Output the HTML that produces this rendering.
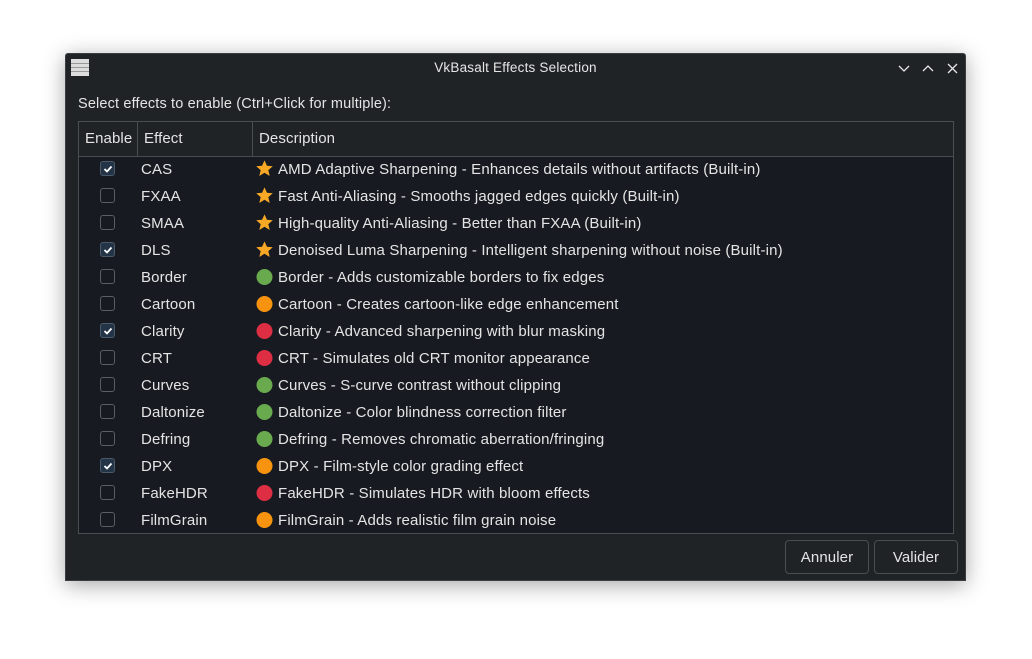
<!DOCTYPE html>
<html><head><meta charset="utf-8"><style>
body{margin:0;width:1032px;height:659px;background:#fff;font-family:"Liberation Sans",sans-serif;position:relative;overflow:hidden}
.win{position:absolute;left:65px;top:53px;width:901px;height:528px;background:#202326;border:1px solid #3a3d42;box-sizing:border-box;box-shadow:0 4px 22px rgba(0,0,0,.35);border-radius:3px 3px 0 0}
.title{position:absolute;left:0;top:0;right:0;height:29px;color:#e6e6e6;font-size:13.5px;text-align:center;line-height:28px;letter-spacing:.2px}
.lbl{position:absolute;left:12px;top:42px;color:#e4e4e4;font-size:14.5px;letter-spacing:.15px}
.tbl{position:absolute;left:12px;top:67px;width:876px;height:413px;background:#171b21;border:1px solid #4a4d52;box-sizing:border-box}
.hdr{position:absolute;left:0;top:0;right:0;height:34px;background:#202326;border-bottom:1px solid #4a4d52;color:#e4e4e4;font-size:15px;letter-spacing:.1px}
.hdr span{position:absolute;top:8px}
.sep{position:absolute;top:0;width:1px;height:34px;background:#4a4d52}
.row{position:absolute;left:0;height:27px;width:100%;color:#e4e4e4;font-size:15px;letter-spacing:.15px}
.cb{position:absolute;left:21px;top:5px;width:15px;height:15px;border:1px solid #5a5e64;border-radius:3px;box-sizing:border-box}
.cb.on{background:#243447;border-color:#4b5a6a}
.cb.on svg{position:absolute;left:1.5px;top:1.5px}
.ef{position:absolute;left:62px;top:5px}
.ic{position:absolute;left:177px;top:4px;width:17px;height:17px}
.ds{position:absolute;left:199px;top:5px}
.btn{position:absolute;top:486px;width:84px;height:34px;border:1px solid #4a4d52;border-radius:4px;box-sizing:border-box;color:#e4e4e4;font-size:15px;text-align:center;line-height:33px;letter-spacing:.1px}
</style></head><body>
<div class="win">
<div class="title">VkBasalt Effects Selection</div>
<svg style="position:absolute;left:5px;top:5px" width="18" height="17"><rect x="0" y="0" width="18" height="17" fill="#ddd"/><g stroke="#999" stroke-width="1"><line x1="0" y1="4.5" x2="18" y2="4.5"/><line x1="0" y1="8.5" x2="18" y2="8.5"/><line x1="0" y1="12.5" x2="18" y2="12.5"/></g></svg>
<svg style="position:absolute;left:830px;top:8px" width="62" height="14" fill="none" stroke="#e6e6e6" stroke-width="1.3"><path d="M3 4l5 5 5-5"/><path d="M27 9l5-5 5 5"/><path d="M52 2l9 9M61 2l-9 9"/></svg>
<div class="lbl">Select effects to enable (Ctrl+Click for multiple):</div>
<div class="tbl">
<div class="hdr"><span style="left:6px">Enable</span><div class="sep" style="left:58px"></div><span style="left:65px">Effect</span><div class="sep" style="left:173px"></div><span style="left:180px">Description</span></div>
<div id="rows"></div>
</div>
<div class="btn" style="left:719px">Annuler</div>
<div class="btn" style="left:808px">Valider</div>
</div>
<script>
var d=[["CAS",1,"s","AMD Adaptive Sharpening - Enhances details without artifacts (Built-in)"],
["FXAA",0,"s","Fast Anti-Aliasing - Smooths jagged edges quickly (Built-in)"],
["SMAA",0,"s","High-quality Anti-Aliasing - Better than FXAA (Built-in)"],
["DLS",1,"s","Denoised Luma Sharpening - Intelligent sharpening without noise (Built-in)"],
["Border",0,"g","Border - Adds customizable borders to fix edges"],
["Cartoon",0,"o","Cartoon - Creates cartoon-like edge enhancement"],
["Clarity",1,"r","Clarity - Advanced sharpening with blur masking"],
["CRT",0,"r","CRT - Simulates old CRT monitor appearance"],
["Curves",0,"g","Curves - S-curve contrast without clipping"],
["Daltonize",0,"g","Daltonize - Color blindness correction filter"],
["Defring",0,"g","Defring - Removes chromatic aberration/fringing"],
["DPX",1,"o","DPX - Film-style color grading effect"],
["FakeHDR",0,"r","FakeHDR - Simulates HDR with bloom effects"],
["FilmGrain",0,"o","FilmGrain - Adds realistic film grain noise"]];
var c={g:"#6aaa4e",o:"#f7930f",r:"#dd2e44"},h="";
d.forEach(function(r,i){
var ic=r[2]=="s"?'<svg class="ic" viewBox="0 0 16 16"><path d="M8 0.3l2.3 5.1 5.5.5-4.2 3.6 1.3 5.5L8 12 3.1 15l1.3-5.5L.2 5.9l5.5-.5z" fill="#f9a825"/></svg>':'<svg class="ic" viewBox="0 0 17 17"><circle cx="8.5" cy="9" r="8" fill="'+c[r[2]]+'"/></svg>';
h+='<div class="row" style="top:'+(34+i*27)+'px"><div class="cb'+(r[1]?' on':'')+'">'+(r[1]?'<svg width="10" height="10"><path d="M1.5 5l2.5 2.5 4.5-5" fill="none" stroke="#fff" stroke-width="1.8"/></svg>':'')+'</div><span class="ef">'+r[0]+'</span>'+ic+'<span class="ds">'+r[3]+'</span></div>';});
document.getElementById("rows").innerHTML=h;
</script>
</body></html>
